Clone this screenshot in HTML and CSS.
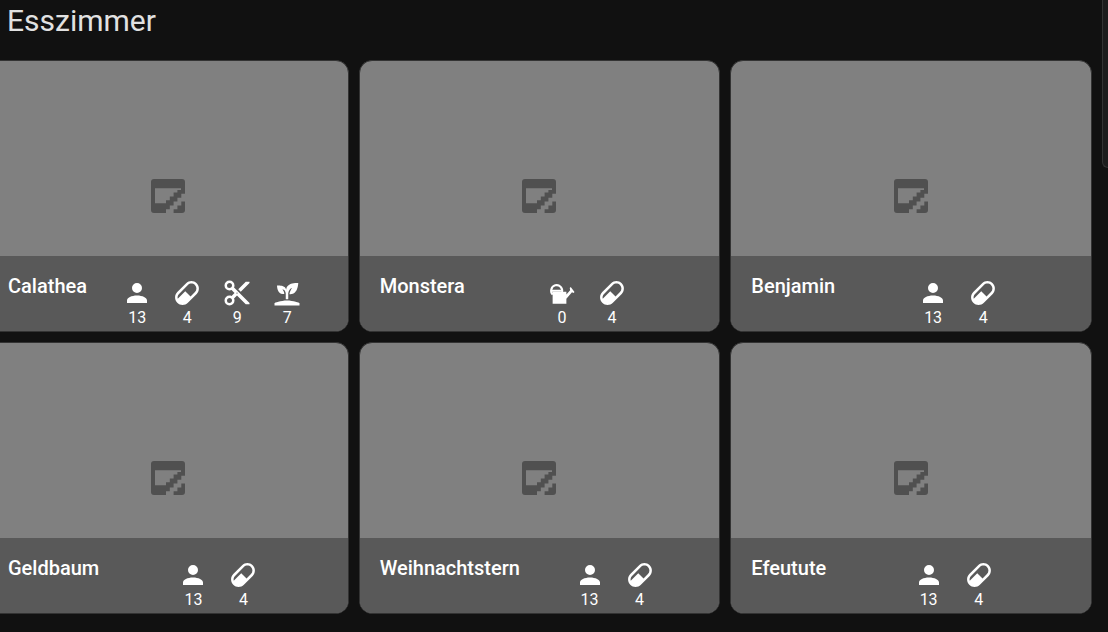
FILE: index.html
```html
<!DOCTYPE html>
<html lang="de">
<head>
<meta charset="utf-8">
<title>Esszimmer</title>
<link rel="stylesheet" href="styles.css">
</head>
<body>
<svg class="sprite" aria-hidden="true">
  <symbol id="person" viewBox="0 0 24 24"><path d="M12,4A4,4 0 0,1 16,8A4,4 0 0,1 12,12A4,4 0 0,1 8,8A4,4 0 0,1 12,4M12,14C16.42,14 20,15.79 20,18V20H4V18C4,15.79 7.58,14 12,14Z"/></symbol>
  <symbol id="pill" viewBox="0 0 24 24"><path d="M4.22,11.29L11.29,4.22C13.64,1.88 17.43,1.88 19.78,4.22C22.12,6.56 22.12,10.36 19.78,12.71L12.71,19.78C10.36,22.12 6.56,22.12 4.22,19.78C1.88,17.43 1.88,13.64 4.22,11.29M5.64,12.71C4.59,13.75 4.24,15.24 4.6,16.57L10.59,10.59L14.83,14.83L18.36,11.29C19.93,9.73 19.93,7.2 18.36,5.64C16.8,4.07 14.27,4.07 12.71,5.64L5.64,12.71Z"/></symbol>
  <symbol id="cut" viewBox="0 0 24 24"><path d="M19,3L13,9L15,11L22,4V3M12,12.5A0.5,0.5 0 0,1 11.5,12A0.5,0.5 0 0,1 12,11.5A0.5,0.5 0 0,1 12.5,12A0.5,0.5 0 0,1 12,12.5M6,20A2,2 0 0,1 4,18C4,16.89 4.9,16 6,16A2,2 0 0,1 8,18C8,19.11 7.1,20 6,20M6,8A2,2 0 0,1 4,6C4,4.89 4.9,4 6,4A2,2 0 0,1 8,6C8,7.11 7.1,8 6,8M9.64,7.64C9.87,7.14 10,6.59 10,6A4,4 0 0,0 6,2A4,4 0 0,0 2,6A4,4 0 0,0 6,10C6.59,10 7.14,9.87 7.64,9.64L10,12L7.64,14.36C7.14,14.13 6.59,14 6,14A4,4 0 0,0 2,18A4,4 0 0,0 6,22A4,4 0 0,0 10,18C10,17.41 9.87,16.86 9.64,16.36L12,14L19,21H22V20L9.64,7.64Z"/></symbol>
  <symbol id="sprout" viewBox="0 0 24 24"><path d="M2,22V20C2,20 7,18 12,18C17,18 22,20 22,20V22H2M11.3,9.1C10.1,5.2 4,6.1 4,6.1C4,6.1 4.2,13.9 9.9,12.6C9.5,9.8 8,9 8,9C10.8,9 11,12.4 11,12.4V17C11.3,17 11.7,17 12,17C12.3,17 12.7,17 13,17V12.8C13,12.8 13,8.9 16,7.9C16,7.9 14,10.9 14,12.9C21,13.6 21,4 21,4C21,4 12.1,3 11.3,9.1Z"/></symbol>
  <symbol id="can" viewBox="0 0 24 24"><path d="M4.5 11V20.5H15.5V16.6L20 11.4 21.2 12 22 11.2 19 7.2 18.2 8 18.5 9.8 15.5 13.2V11Z"/><path d="M4.6 13.2A4.4 4.4 0 1 1 12 11.2M3.6 10.2H12" fill="none" stroke="#fff" stroke-width="1.7"/></symbol>
  <symbol id="missing" viewBox="0 0 36 36"><path fill-rule="evenodd" d="M4 0H32Q35 0 35 3V14.7H31.3V18.7H27.4V22.6H23.6V26.4H19.8V30.3H16V34H4Q1 34 1 31V3Q1 0 4 0ZM5 9.3V24.3H16V21.3H19.8V17.4H23.6V13.6H27.4V11H31V9.3ZM35 22.6V31Q35 34 32 34H23.6V30.3H27.4V26.4H31.3V22.6Z"/></symbol>
</svg>
<main class="page">
  <h1 class="title">Esszimmer</h1>
  <div class="grid">
    <article class="card">
      <div class="photo"><svg class="missing"><use href="#missing"/></svg></div>
      <div class="bar"><h2 class="name">Calathea</h2><div class="actions">
        <button class="action"><svg class="icon"><use href="#person"/></svg>13</button>
        <button class="action"><svg class="icon"><use href="#pill"/></svg>4</button>
        <button class="action"><svg class="icon"><use href="#cut"/></svg>9</button>
        <button class="action"><svg class="icon"><use href="#sprout"/></svg>7</button>
      </div></div>
    </article>
    <article class="card">
      <div class="photo"><svg class="missing"><use href="#missing"/></svg></div>
      <div class="bar"><h2 class="name">Monstera</h2><div class="actions">
        <button class="action"><svg class="icon"><use href="#can"/></svg>0</button>
        <button class="action"><svg class="icon"><use href="#pill"/></svg>4</button>
      </div></div>
    </article>
    <article class="card">
      <div class="photo"><svg class="missing"><use href="#missing"/></svg></div>
      <div class="bar"><h2 class="name">Benjamin</h2><div class="actions">
        <button class="action"><svg class="icon"><use href="#person"/></svg>13</button>
        <button class="action"><svg class="icon"><use href="#pill"/></svg>4</button>
      </div></div>
    </article>
    <article class="card">
      <div class="photo"><svg class="missing"><use href="#missing"/></svg></div>
      <div class="bar"><h2 class="name">Geldbaum</h2><div class="actions">
        <button class="action"><svg class="icon"><use href="#person"/></svg>13</button>
        <button class="action"><svg class="icon"><use href="#pill"/></svg>4</button>
      </div></div>
    </article>
    <article class="card">
      <div class="photo"><svg class="missing"><use href="#missing"/></svg></div>
      <div class="bar"><h2 class="name">Weihnachtstern</h2><div class="actions">
        <button class="action"><svg class="icon"><use href="#person"/></svg>13</button>
        <button class="action"><svg class="icon"><use href="#pill"/></svg>4</button>
      </div></div>
    </article>
    <article class="card">
      <div class="photo"><svg class="missing"><use href="#missing"/></svg></div>
      <div class="bar"><h2 class="name">Efeutute</h2><div class="actions">
        <button class="action"><svg class="icon"><use href="#person"/></svg>13</button>
        <button class="action"><svg class="icon"><use href="#pill"/></svg>4</button>
      </div></div>
    </article>
  </div>
</main>
<aside class="side"></aside>
</body>
</html>
```
FILE: styles.css
```css
* { box-sizing: border-box; }
body {
  margin: 0;
  display: flex;
  align-items: flex-start;
  overflow: hidden;
  background: #111;
  color: #fff;
  font-family: Roboto, sans-serif;
}
.sprite { position: absolute; width: 0; height: 0; }
.page { flex: 1; margin-left: -13px; }
.title {
  margin: 0;
  padding: 0 20px 18px;
  font-size: 30px;
  line-height: 42px;
  font-weight: 400;
  color: #e1e1e1;
}
.grid {
  display: grid;
  grid-template-columns: repeat(3, 1fr);
  gap: 10px;
}
.card {
  border: 1px solid #333;
  border-radius: 13px;
  overflow: hidden;
  background: #808080;
}
.photo {
  height: 195px;
  padding-top: 118px;
  text-align: center;
}
.missing { width: 36px; height: 36px; fill: #505050; }
.bar {
  display: flex;
  height: 75px;
  padding: 0 10px 0 20px;
  background: #595959;
}
.name {
  margin: 0;
  padding-top: 18px;
  font-size: 20px;
  line-height: 24px;
  font-weight: 500;
}
.actions {
  flex: 1;
  display: flex;
  justify-content: center;
  padding-top: 22px;
}
.action {
  display: flex;
  flex-direction: column;
  align-items: center;
  width: 50px;
  padding: 0;
  border: 0;
  background: none;
  color: inherit;
  font: 16px/20px Roboto, sans-serif;
}
.icon { flex: none; width: 30px; height: 30px; fill: #fff; }
.side {
  width: 6px;
  height: 168px;
  margin-left: 10px;
  border: solid #333;
  border-width: 0 0 1px 1px;
  border-radius: 0 0 0 12px;
  background: #1c1c1c;
}
```
